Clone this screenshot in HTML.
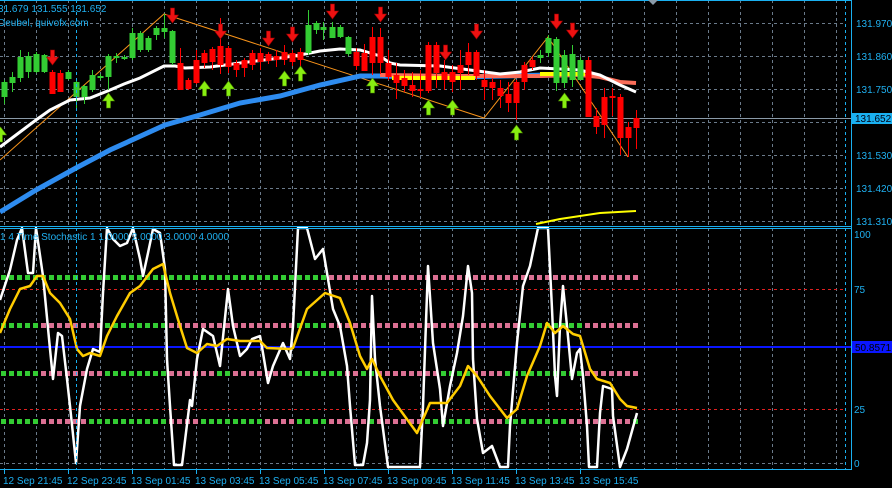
<!DOCTYPE html>
<html><head><meta charset="utf-8"><style>
html,body{margin:0;padding:0;background:#000;width:892px;height:488px;overflow:hidden}
svg{display:block}
text{font-family:"Liberation Sans",sans-serif;font-size:10px;fill:#1fb0f0}
</style></head><body>
<svg id="s" width="892" height="488" xmlns="http://www.w3.org/2000/svg">
<rect width="892" height="488" fill="#000"/>
<g id="grid"></g>
<g id="bands"></g>
<line x1="0" y1="118.5" x2="851" y2="118.5" stroke="#8a9aa8" stroke-width="1"/>
<line x1="0" y1="409.5" x2="845" y2="409.5" stroke="#e02020" stroke-dasharray="3,3"/>
<line x1="0" y1="289.5" x2="845" y2="289.5" stroke="#e02020" stroke-dasharray="3,3"/>
<line x1="0" y1="347" x2="851" y2="347" stroke="#0a16ff" stroke-width="2"/>
<polyline fill="none" stroke="#f7931a" stroke-width="1" points="0,160 164,14 484,118 548,37 628,157"/>
<polyline fill="none" stroke="#2e8cf0" stroke-width="5" points="0,212 36,190 76,168 110,150 165,125 200,115 240,103 280,96 320,85 360,76 380,76 420,77 460,77 548,75"/>
<polyline fill="none" stroke="#fa6e5a" stroke-width="4" points="380,75 460,76 540,76 580,75 600,77 620,82 636,83"/>
<polyline fill="none" stroke="#ffff00" stroke-width="4" points="392,78 475,78"/>
<polyline fill="none" stroke="#ffff00" stroke-width="4" points="540,74 585,74"/>
<polyline fill="none" stroke="#fff" stroke-width="3" points="0,147 20,132 36,120 50,110 70,100 90,98 110,90 124,84 140,78 164,66 175,66 185,68 210,67 240,63 280,58 300,55 320,51 340,49 360,50 380,56 390,63 400,65 440,66 470,70 500,74 520,72 540,68 580,70 600,75 620,85 636,92"/>
<polyline fill="none" stroke="#ffff00" stroke-width="2" points="536,224 560,219 600,213 636,211"/>
<g id="candles"></g>
<g id="arrows"></g>
<polyline fill="none" stroke="#fff" stroke-width="2.5" stroke-linejoin="round" points="0,300 10,270 17,240 22,228 28,273 33,273 36,228 43,276 50,349 53,379 58,333 62,336 67,379 70,406 76,463 80,406 87,369 93,349 100,352 103,293 107,228 113,239 120,246 127,243 133,228 140,259 143,276 148,253 153,229 160,233 165,269 167,359 170,406 174,465 182,465 190,400 192,406 197,359 203,329 213,336 220,366 228,289 233,326 240,356 247,349 252,339 260,336 263,353 268,383 273,366 283,343 290,359 293,326 298,228 307,228 315,259 323,249 333,309 340,326 347,366 350,406 355,465 363,465 367,443 370,400 372,296 375,359 380,406 388,467 420,467 423,406 428,266 433,343 440,389 443,426 450,386 457,353 463,316 468,266 472,293 473,359 477,419 483,453 492,446 500,467 508,467 510,426 517,343 523,286 530,266 538,228 548,228 552,309 555,376 557,396 560,326 563,286 567,326 572,379 577,353 580,349 583,376 587,426 589,467 597,467 600,413 603,386 612,389 613,416 620,467 627,449 637,413"/>
<polyline fill="none" stroke="#ffcc00" stroke-width="2.5" stroke-linejoin="round" points="0,333 10,309 20,289 30,286 37,276 43,276 50,293 60,303 70,319 77,349 83,356 90,353 100,356 107,336 117,316 130,293 140,286 153,269 163,264 170,293 180,326 187,348 197,353 207,344 217,346 227,339 240,341 260,341 267,348 290,349 293,348 307,309 325,293 340,298 350,323 360,356 367,369 372,359 380,376 393,400 417,433 430,403 447,403 460,386 468,366 477,376 490,396 507,418 517,409 527,376 540,346 547,323 555,333 563,326 573,334 580,336 590,369 597,379 610,383 620,399 627,406 637,408"/>
<line x1="0" y1="0.5" x2="851" y2="0.5" stroke="#1ab0f0"/>
<line x1="0" y1="226.5" x2="851" y2="226.5" stroke="#1ab0f0"/>
<line x1="0" y1="228.5" x2="851" y2="228.5" stroke="#1ab0f0"/>
<line x1="0" y1="469.5" x2="851" y2="469.5" stroke="#1ab0f0"/>
<line x1="851.5" y1="0" x2="851.5" y2="470" stroke="#1ab0f0"/>
<line x1="845.5" y1="0" x2="845.5" y2="470" stroke="#1ab0f0" stroke-dasharray="3,3"/>
<line x1="76.5" y1="0" x2="76.5" y2="470" stroke="#1ab0f0" stroke-dasharray="3,3"/>
<polygon points="648,0 658,0 653,5" fill="#8a9aa8"/>
<text x="-2" y="12">31.679 131.555 131.652</text>
<text x="-2" y="26">Deubel, quivofx.com</text>
<text x="0" y="240">1  4 Time Stochastic 1 1.0000 2.0000 3.0000 4.0000</text>
<text x="856" y="27">131.970</text>
<text x="856" y="60">131.860</text>
<text x="856" y="93">131.750</text>
<rect x="852" y="113" width="40" height="11" fill="#1ab0f0"/>
<text x="855" y="122" style="fill:#001">131.652</text>
<text x="856" y="159">131.530</text>
<text x="856" y="192">131.420</text>
<text x="856" y="225">131.310</text>
<text x="854" y="238">100</text>
<text x="854" y="293">75</text>
<rect x="852" y="341" width="40" height="12" fill="#0a16ff"/>
<text x="855" y="351" style="fill:#000">50.8571</text>
<text x="854" y="413">25</text>
<text x="854" y="467">0</text>
<g id="times"></g>
</svg>
<script>
var NS="http://www.w3.org/2000/svg";
function el(p,t,a){var e=document.createElementNS(NS,t);for(var k in a)e.setAttribute(k,a[k]);document.getElementById(p).appendChild(e);return e;}
for(var x=4;x<=840;x+=32){el("grid","line",{x1:x+.5,y1:0,x2:x+.5,y2:470,stroke:"#6a7a8a","stroke-dasharray":"3,3"});}
[23,56,89,122,155,188,221].forEach(function(y){el("grid","line",{x1:0,y1:y+.5,x2:845,y2:y+.5,stroke:"#6a7a8a","stroke-dasharray":"3,3"});});
el("grid","line",{x1:0,y1:463.5,x2:845,y2:463.5,stroke:"#6a7a8a","stroke-dasharray":"3,3"});
var G="#33cc33",P="#db7093";
var bands=[[277,[[0,328,G],[328,640,P]]],
[325,[[0,40,G],[40,104,P],[104,167,G],[167,297,P],[297,328,G],[328,520,P],[520,580,G],[580,640,P]]],
[373,[[0,40,G],[40,104,P],[104,167,G],[167,217,P],[217,230,G],[230,297,P],[297,345,G],[345,360,P],[360,375,G],[375,440,P],[440,470,G],[470,507,P],[507,580,G],[580,640,P]]],
[421,[[0,40,G],[40,88,P],[88,167,G],[167,197,P],[197,263,G],[263,293,P],[293,328,G],[328,367,P],[367,377,G],[377,423,P],[423,447,G],[447,470,G],[470,507,P],[507,567,G],[567,634,P],[634,640,G]]]];
bands.forEach(function(b){for(var x=1;x<640;x+=8){var c=P;b[1].forEach(function(s){if(x+2>=s[0]&&x+2<s[1])c=s[2];});el("bands","rect",{x:x,y:b[0]-2,width:5,height:5,fill:c});}});
var C=[[4,97,82,104,80],[12,83,77,92,72],[20,78,57,82,50],[28,72,56,78,52],[36,72,54,73,52],[44,72,55,73,54],[52,72,94,94,70],[60,73,92,92,70],[68,79,72,80,70],[76,97,82,108,80],[84,97,86,104,85],[92,90,75,92,70],[100,78,76,80,74],[108,77,56,90,54],[116,58,56,63,53],[124,58,57,60,55],[132,58,33,60,28],[140,50,33,52,31],[148,50,38,52,36],[156,35,28,40,26],[164,32,28,38,14],[172,63,31,65,30],[180,63,90,90,48],[188,80,89,90,78],[196,60,83,84,50],[204,53,63,68,50],[212,49,62,70,47],[220,46,65,74,18],[228,48,67,73,46],[236,63,70,77,60],[244,60,68,77,58],[252,53,65,70,50],[260,53,62,70,48],[268,54,61,64,52],[276,56,60,67,50],[284,52,60,65,45],[292,53,62,66,50],[300,52,60,66,48],[308,53,25,55,10],[316,30,23,34,21],[323,30,27,40,22],[332,38,27,38,22],[340,37,27,38,25],[348,54,37,56,36],[356,52,66,70,48],[364,53,71,71,44],[372,37,63,75,27],[380,37,63,74,28],[388,63,77,80,50],[396,75,83,99,63],[404,78,86,92,70],[412,85,91,97,72],[420,89,91,98,70],[428,45,91,93,42],[436,45,73,88,42],[444,72,80,90,60],[452,72,82,92,65],[460,65,73,90,50],[468,52,65,75,43],[476,52,76,80,50],[484,80,87,100,70],[492,82,88,100,78],[500,88,96,108,80],[508,94,103,112,82],[516,82,103,120,80],[524,65,82,90,62],[532,60,67,70,57],[540,58,55,63,50],[548,53,38,57,35],[556,83,39,91,37],[564,83,55,88,50],[572,80,54,87,45],[580,80,60,80,57],[588,60,117,117,57],[596,116,127,134,108],[604,97,125,138,88],[612,96,98,116,88],[620,97,138,155,94],[628,127,138,157,122],[636,118,128,149,110]];
C.forEach(function(c){var up=c[2]<c[1],col=up?"#33cc33":"#ff0000",x=c[0];
el("candles","line",{x1:x+.5,y1:c[3],x2:x+.5,y2:c[4],stroke:col});
var t=Math.min(c[1],c[2]),h=Math.max(2,Math.abs(c[1]-c[2]));el("candles","rect",{x:x-2.5,y:t,width:6,height:h,fill:col});});
function down(x,y){el("arrows","path",{d:"M"+(x-1.5)+" "+(y-8)+"h4v7h4l-6 8-6-8h4z",fill:"#ee1111",stroke:"#900","stroke-width":"0.6"});}
function up(x,y){el("arrows","path",{d:"M"+(x-1.5)+" "+(y+8)+"h4v-7h4l-6-8-6 8h4z",fill:"#88ee11",stroke:"#4a8a00","stroke-width":"0.6"});}
[[52,58],[172,16],[220,32],[268,39],[292,35],[332,12],[380,15],[445,53],[476,32],[556,22],[572,31]].forEach(function(a){down(a[0],a[1]);});
[[108,100],[204,88],[228,88],[284,78],[300,73],[372,85],[428,107],[452,107],[516,132],[564,100],[0,134]].forEach(function(a){up(a[0],a[1]);});
var L=["12 Sep 21:45","12 Sep 23:45","13 Sep 01:45","13 Sep 03:45","13 Sep 05:45","13 Sep 07:45","13 Sep 09:45","13 Sep 11:45","13 Sep 13:45","13 Sep 15:45"];
L.forEach(function(s,i){var x=4+64*i;el("times","line",{x1:x+.5,y1:469,x2:x+.5,y2:474,stroke:"#1ab0f0"});var t=el("times","text",{x:x-1,y:484});t.textContent=s;});
</script>
</body></html>
